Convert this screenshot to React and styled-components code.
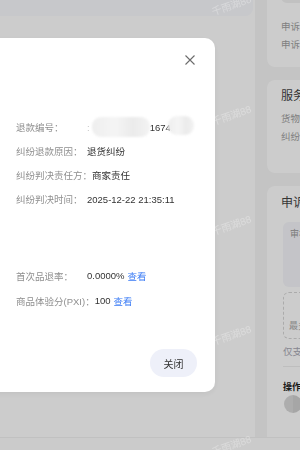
import React from "react";
import styled, {createGlobalStyle} from "styled-components";

const GlobalStyle = createGlobalStyle`
  html, body {
    margin: 0;
    width: 300px;
    height: 450px;
    overflow: hidden;
  }
  body {
    font-family: "Liberation Sans", "Noto Sans CJK SC", sans-serif;
    color: #333;
  }
`;

const Page = styled.div`
  display: grid;
  grid-template-rows: 1fr 13px;
  height: 450px;
`;

const Content = styled.div`
  display: grid;
  grid-template-columns: 255px 1fr;
  overflow: hidden;
`;

const Main = styled.div`
  background: #ffffff;
`;

const TopBar = styled.div`
  height: 16px;
  margin: 0 2px 0 -10px;
  background: #f9fafe;
  border-radius: 0 0 8px 8px;
`;

const Side = styled.div`
  background: #f5f5f5;
  padding-left: 12px;
  margin-top: -34px;
  display: flex;
  flex-direction: column;
  gap: 13px;
  overflow: hidden;
`;

const Card = styled.div`
  flex-shrink: 0;
  min-width: 220px;
  min-height: ${p => p.$minH || 0}px;
  box-sizing: border-box;
  background: #ffffff;
  border-radius: 8px;
  padding: ${p => p.$pt}px 14px 13px 14px;
  display: flex;
  flex-direction: column;
`;

const GhostBtn = styled.div`
  height: 24px;
  width: 120px;
  background: #f2f2f2;
  border-radius: 6px;
  margin-bottom: 15px;
`;

const SideRow = styled.div`
  font-size: 9.5px;
  line-height: 18px;
  color: #a0a0a0;
  white-space: nowrap;
`;

const SideTitle = styled.div`
  font-size: 12px;
  line-height: 16px;
  color: #444;
  white-space: nowrap;
  margin-bottom: ${p => p.$mb || 0}px;
`;

const GrayBox = styled.div`
  height: 65px;
  margin-left: 2px;
  background: #f5f6fa;
  border-radius: 6px;
  padding: 5px 7px;
  box-sizing: border-box;
  font-size: 9px;
  color: #999;
`;

const DashBox = styled.div`
  height: 47px;
  margin: 5px 0 0 2px;
  border: 1px dashed #d6d6d6;
  border-radius: 6px;
  box-sizing: border-box;
  display: flex;
  align-items: flex-end;
  padding: 0 5px 6px;
  font-size: 9px;
  color: #aaa;
`;

const Hint = styled.div`
  margin: 6px 0 0 2px;
  font-size: 9.5px;
  line-height: 14px;
  color: #a8a8b4;
  white-space: nowrap;
`;

const Divider = styled.div`
  height: 1px;
  background: #eeeeee;
  margin: 7px 0 0 2px;
`;

const OpTitle = styled.div`
  margin: 14px 0 0 2px;
  font-size: 9px;
  font-weight: bold;
  color: #222;
  line-height: 12px;
`;

const Avatar = styled.div`
  width: 18px;
  height: 18px;
  margin: 2px 0 0 3px;
  border-radius: 50%;
  background: linear-gradient(90deg, #d9d9d9 50%, #d0d0d0 50%);
`;

const Footer = styled.div`
  background: #fefefe;
  border-top: 1px solid #f2f2f2;
`;

const Mask = styled.div`
  position: fixed;
  inset: 0;
  background: rgba(0, 0, 0, 0.2);
`;

const Modal = styled.div`
  position: fixed;
  top: 38px;
  left: -20px;
  width: 235px;
  height: 354px;
  box-sizing: border-box;
  background: #fff;
  border-radius: 10px;
  box-shadow: 0 2px 6px rgba(0, 0, 0, 0.06);
  padding: 77px 0 0 36px;
  display: flex;
  flex-direction: column;
`;

const CloseIcon = styled.svg`
  position: absolute;
  top: 17px;
  right: 20px;
  width: 10px;
  height: 10px;
`;

const Section = styled.div`
  display: flex;
  flex-direction: column;
  margin-top: ${p => p.$mt || 0}px;
`;

const Row = styled.div`
  display: flex;
  align-items: center;
  height: ${p => p.$h}px;
  font-size: 9.5px;
  white-space: nowrap;
`;

const Label = styled.span`
  min-width: 71px;
  color: #8f8f8f;
`;

const Value = styled.span`
  display: inline-flex;
  align-items: center;
  color: #333;
`;

const Link = styled.span`
  color: #3a7bf5;
  margin-left: 3px;
`;

const Blur = styled.span`
  display: inline-block;
  width: ${p => p.$w}px;
  height: ${p => p.$h}px;
  margin: ${p => p.$m};
  border-radius: 9px;
  background: linear-gradient(90deg, #eeeeee 0%, #f5f5f5 40%, #ebebeb 70%, #f3f3f3 100%);
  filter: blur(1px);
`;

const Faint = styled.span`
  color: #c4c4c4;
`;

const Actions = styled.div`
  margin-top: auto;
  display: flex;
  justify-content: flex-end;
  padding: 0 18px 15px 0;
`;

const Button = styled.button`
  width: 47px;
  height: 28px;
  border: none;
  border-radius: 14px;
  background: #eef0f9;
  color: #333;
  font-family: inherit;
  font-size: 10px;
  padding: 0;
`;

const MarkLayer = styled.div`
  position: fixed;
  top: -51px;
  left: 208px;
  width: 46px;
  display: flex;
  flex-direction: column;
  pointer-events: none;
`;

const Mark = styled.div`
  height: 110px;
  display: flex;
  align-items: center;
  justify-content: center;
  font-size: 10px;
  color: rgba(255, 255, 255, 0.3);
  transform: rotate(-19deg);
  white-space: nowrap;
`;

const infoRows = [
    ["纠纷退款原因：", "退货纠纷"],
    ["纠纷判决责任方：", "商家责任"],
    ["纠纷判决时间：", "2025-12-22 21:35:11"],
];

export default function App() {
    return (
        <>
            <GlobalStyle/>
            <Page>
                <Content>
                    <Main>
                        <TopBar/>
                    </Main>
                    <Side>
                        <Card $pt={13}>
                            <GhostBtn/>
                            <SideRow>申诉编号：</SideRow>
                            <SideRow>申诉时间：</SideRow>
                        </Card>
                        <Card $pt={8} $minH={93}>
                            <SideTitle $mb={6}>服务信息</SideTitle>
                            <SideRow>货物状态：</SideRow>
                            <SideRow>纠纷类型：</SideRow>
                        </Card>
                        <Card $pt={9} $minH={260}>
                            <SideTitle $mb={11}>申诉说明</SideTitle>
                            <GrayBox>审核说明</GrayBox>
                            <DashBox>最多上传9张</DashBox>
                            <Hint>仅支持jpg、png格式</Hint>
                            <Divider/>
                            <OpTitle>操作记录</OpTitle>
                            <Avatar/>
                        </Card>
                    </Side>
                </Content>
                <Footer/>
            </Page>
            <Mask/>
            <Modal>
                <CloseIcon viewBox="0 0 10 10">
                    <path d="M0.5 0.5 L9.5 9.5 M9.5 0.5 L0.5 9.5" stroke="#6b6b6b" strokeWidth="1.1" fill="none"/>
                </CloseIcon>
                <Section>
                    <Row $h={24}>
                        <Label>退款编号：</Label>
                        <Value>
                            <Faint>:</Faint>
                            <Blur $w={58} $h={20} $m="0 0 0 2px"/>
                            1674.
                            <Blur $w={26} $h={19} $m="-4px 0 0 -5px"/>
                        </Value>
                    </Row>
                    {infoRows.map(([k, v]) => (
                        <Row key={k} $h={24}>
                            <Label>{k}</Label>
                            <Value>{v}</Value>
                        </Row>
                    ))}
                </Section>
                <Section $mt={52}>
                    <Row $h={25}>
                        <Label>首次品退率：</Label>
                        <Value>0.0000%<Link>查看</Link></Value>
                    </Row>
                    <Row $h={25}>
                        <Label>商品体验分(PXI)：</Label>
                        <Value>100<Link>查看</Link></Value>
                    </Row>
                </Section>
                <Actions>
                    <Button>关闭</Button>
                </Actions>
            </Modal>
            <MarkLayer>
                {[0, 1, 2, 3, 4].map(i => <Mark key={i}>千雨湖88</Mark>)}
            </MarkLayer>
        </>
    );
}
